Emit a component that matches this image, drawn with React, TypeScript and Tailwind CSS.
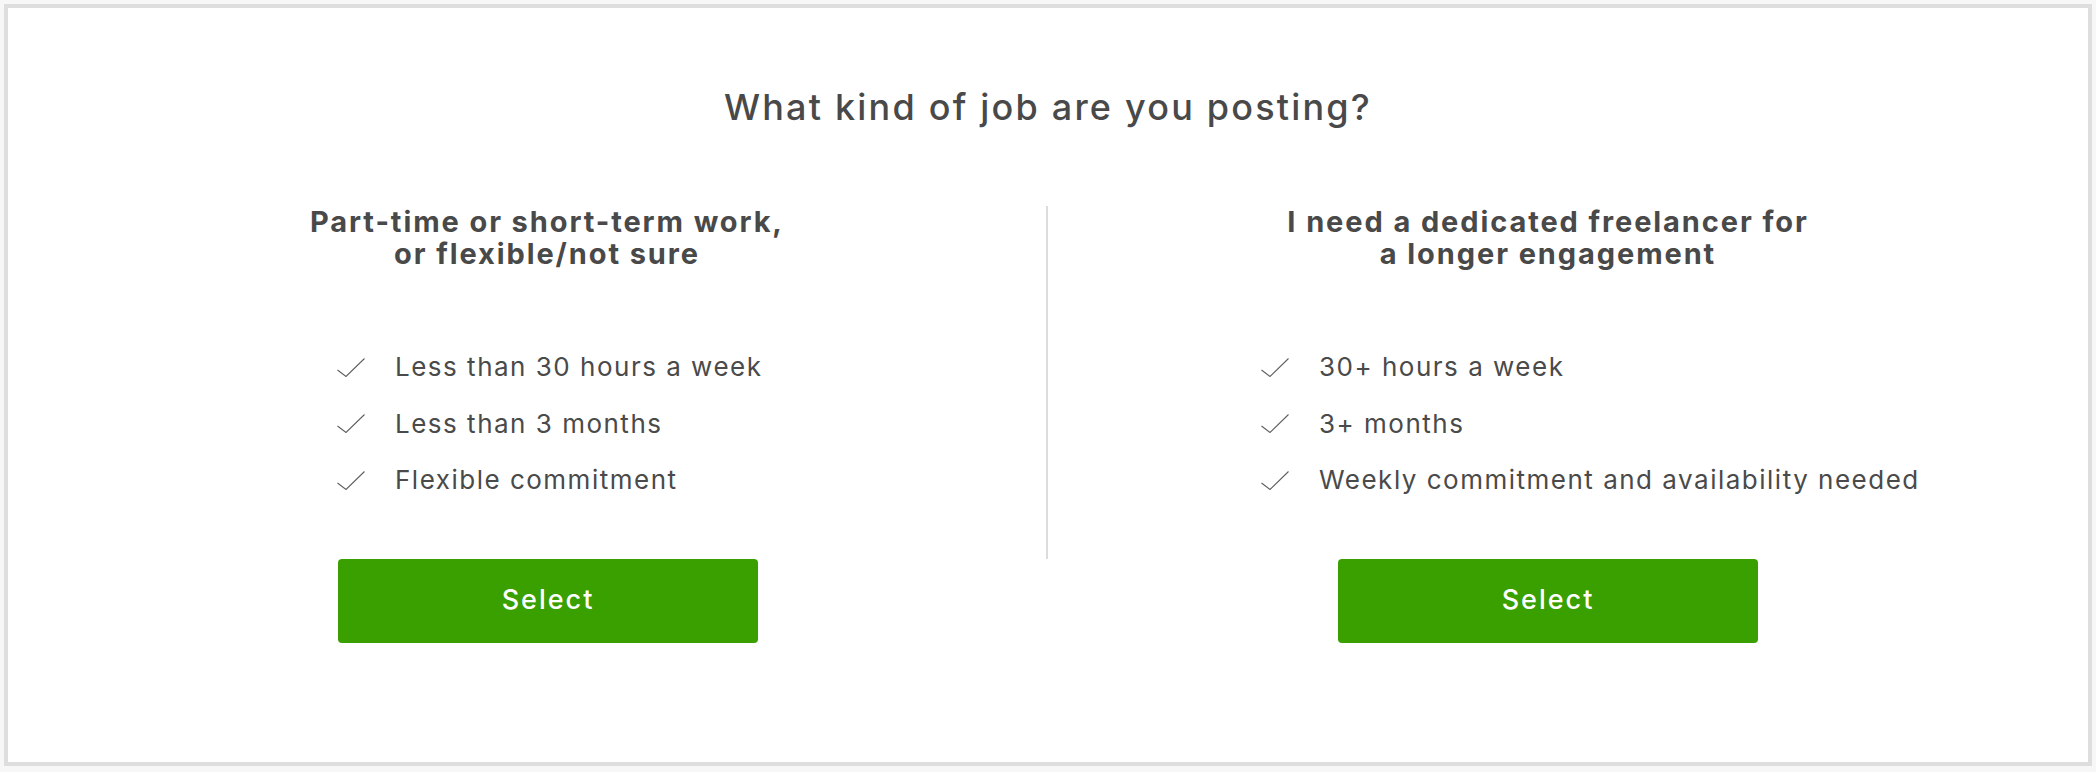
import type { ReactNode } from "react";

type Option = {
  heading: ReactNode;
  items: string[];
  listClass: string;
  divider?: boolean;
};

const options: Option[] = [
  {
    heading: (
      <>
        Part-time or short-term work,
        <br />
        or flexible/not sure
      </>
    ),
    items: ["Less than 30 hours a week", "Less than 3 months", "Flexible commitment"],
    listClass: "ml-[289px]",
    divider: true,
  },
  {
    heading: (
      <>
        I need a dedicated freelancer for
        <br />
        a longer engagement
      </>
    ),
    items: ["30+ hours a week", "3+ months", "Weekly commitment and availability needed"],
    listClass: "ml-[213px]",
  },
];

function Check() {
  return (
    <svg width="28" height="19" viewBox="0 0 28 19" fill="none" className="shrink-0">
      <polyline points="0.5,12 9,18.5 27.5,0.5" stroke="#5f5f5f" strokeWidth="1.1" />
    </svg>
  );
}

function OptionColumn({ option }: { option: Option }) {
  return (
    <div className="flex flex-col">
      <div className={`pb-[50px] ${option.divider ? "border-r-2 border-[#dcdcdc]" : ""}`}>
        <h3 className="text-center text-[29px] font-bold leading-[32px] tracking-[1.9px] text-[#494949]">
          {option.heading}
        </h3>
        <ul className={`mt-[69px] flex flex-col ${option.listClass}`}>
          {option.items.map((item) => (
            <li key={item} className="flex h-[56.5px] items-center gap-[30px]">
              <Check />
              <span className="text-[26px] leading-[56px] tracking-[1.5px] text-[#4a4a4a]">{item}</span>
            </li>
          ))}
        </ul>
      </div>
      <button className="mx-auto flex h-[84px] w-[420px] items-center justify-center rounded-[4px] bg-[#39a000] text-[27px] font-medium tracking-[2px] text-white">
        Select
      </button>
    </div>
  );
}

export default function App() {
  return (
    <div className="h-[772px] bg-[#f7f7f7] p-1 pb-[6px] font-['Inter',sans-serif]">
      <div className="h-[762px] border-4 border-[#dedede] bg-white px-[40px] pt-[82px]">
        <h1 className="text-center text-[36px] font-medium leading-[35px] tracking-[2.2px] text-[#494949]">
          What kind of job are you posting?
        </h1>
        <div className="mt-[81px] grid grid-cols-2">
          {options.map((option, i) => (
            <OptionColumn key={i} option={option} />
          ))}
        </div>
      </div>
    </div>
  );
}
